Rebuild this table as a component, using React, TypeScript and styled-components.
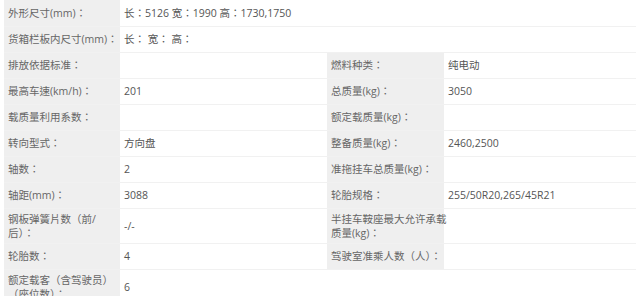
import React from "react";
import styled, { createGlobalStyle } from "styled-components";

type Row =
  | { label: string; value: string; wide: true }
  | { label: string; value: string; label2: string; value2: string; wide?: false };

// labels keep their own line breaks, as on the source page
const rows: Row[] = [
  { label: "外形尺寸(mm)：", value: "长：5126 宽：1990 高：1730,1750", wide: true },
  { label: "货箱栏板内尺寸(mm)：", value: "长： 宽： 高：", wide: true },
  { label: "排放依据标准：", value: "", label2: "燃料种类：", value2: "纯电动" },
  { label: "最高车速(km/h)：", value: "201", label2: "总质量(kg)：", value2: "3050" },
  { label: "载质量利用系数：", value: "", label2: "额定载质量(kg)：", value2: "" },
  { label: "转向型式：", value: "方向盘", label2: "整备质量(kg)：", value2: "2460,2500" },
  { label: "轴数：", value: "2", label2: "准拖挂车总质量(kg)：", value2: "" },
  { label: "轴距(mm)：", value: "3088", label2: "轮胎规格：", value2: "255/50R20,265/45R21" },
  { label: "钢板弹簧片数（前/\n后）：", value: "-/-", label2: "半挂车鞍座最大允许承载\n质量(kg)：", value2: "" },
  { label: "轮胎数：", value: "4", label2: "驾驶室准乘人数（人）：", value2: "" },
  { label: "额定载客（含驾驶员）\n（座位数）：", value: "6", wide: true },
];

const GlobalStyle = createGlobalStyle`
  body {
    margin: 0;
    background: #ffffff;
    font-family: "Open Sans", "Noto Sans CJK TC", sans-serif;
  }
`;

const Page = styled.div`
  padding: 0 0 0 4px;
  width: 636px;
  height: 296px;
  overflow: hidden;
  box-sizing: border-box;
`;

const Table = styled.table`
  width: 632px;
  table-layout: fixed;
  border-collapse: collapse;
  font-size: 10.5px;
  color: #555;
`;

const Tr = styled.tr`
  border-bottom: 1px solid #f1f1f1;
`;

const Cell = styled.td<{ $head?: boolean }>`
  height: 26px;
  box-sizing: border-box;
  padding: ${(p) => (p.$head ? "3px 0 3px 4px" : "3px 4px")};
  line-height: 14px;
  vertical-align: middle;
  background: ${(p) => (p.$head ? "#efefef" : "#ffffff")};
  color: ${(p) => (p.$head ? "#666" : "#555")};
  white-space: ${(p) => (p.$head ? "pre" : "normal")};
  overflow: visible;
`;

export default function App() {
  return (
    <Page>
      <GlobalStyle />
      <Table>
        <colgroup>
          <col style={{ width: 116 }} />
          <col style={{ width: 207 }} />
          <col style={{ width: 117 }} />
          <col style={{ width: 192 }} />
        </colgroup>
        <tbody>
          {rows.map((r, i) => (
            <Tr key={i}>
              <Cell $head>{r.label}</Cell>
              {r.wide ? (
                <Cell colSpan={3}>{r.value}</Cell>
              ) : (
                <>
                  <Cell>{r.value}</Cell>
                  <Cell $head>{r.label2}</Cell>
                  <Cell>{r.value2}</Cell>
                </>
              )}
            </Tr>
          ))}
        </tbody>
      </Table>
    </Page>
  );
}
